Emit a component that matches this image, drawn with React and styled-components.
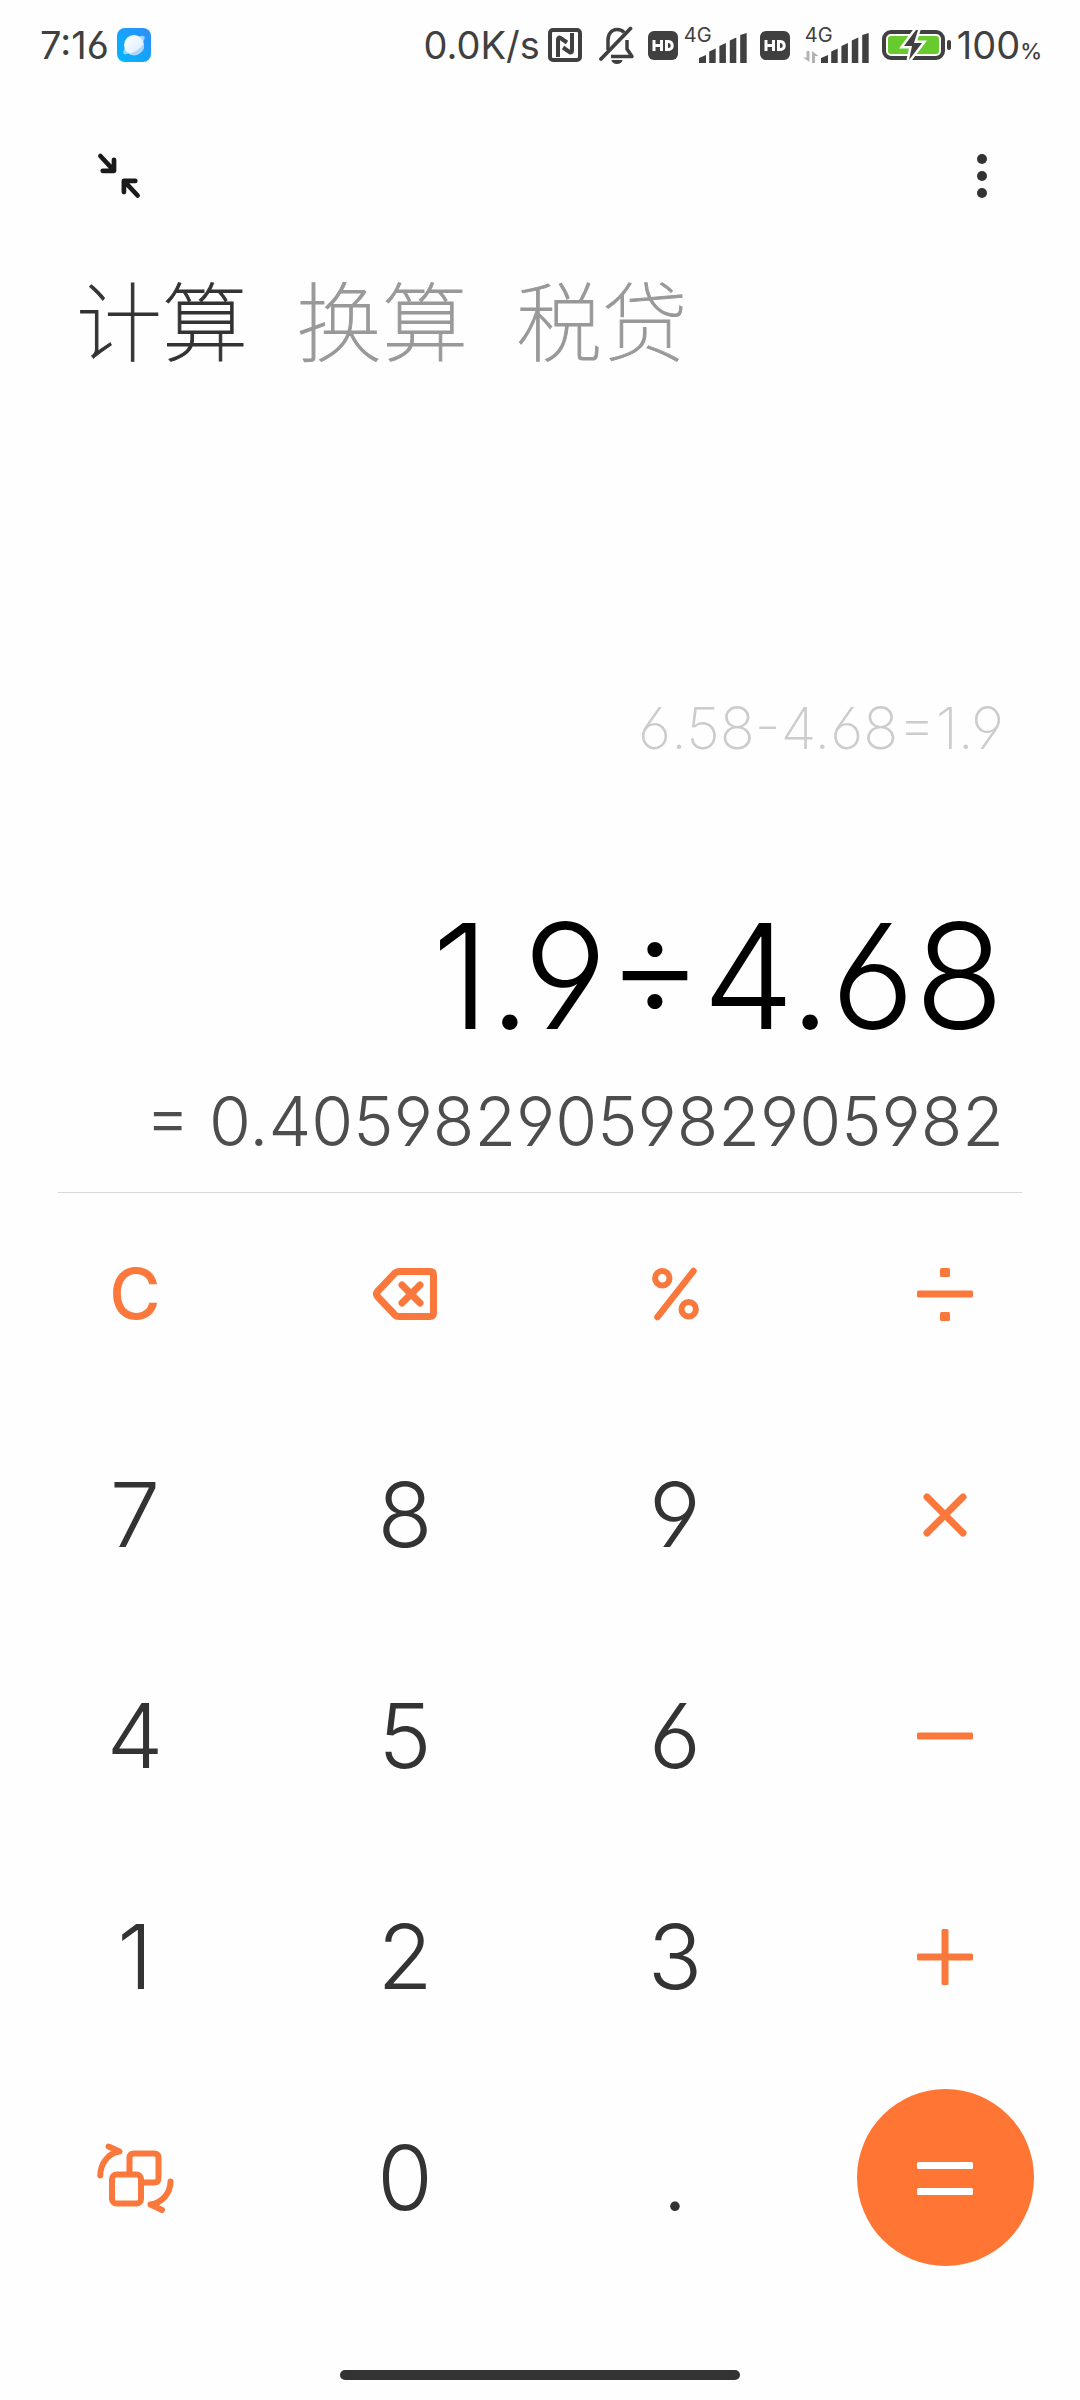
import React from 'react';
import styled, { createGlobalStyle } from 'styled-components';

const GlobalStyle = createGlobalStyle`
  * { box-sizing: border-box; }
  body {
    margin: 0;
    background: #fefefe;
    color: #333333;
    font-family: Inter, "Noto Sans CJK SC", sans-serif;
    font-feature-settings: "cv03", "cv04";
  }
  button {
    border: 0;
    padding: 0;
    background: none;
    color: inherit;
    font: inherit;
    font-feature-settings: inherit;
    cursor: pointer;
  }
  svg { display: block; }
`;

const Page = styled.div`
  display: flex;
  flex-direction: column;
  min-height: 100vh;
`;

const StatusBar = styled.header`
  display: flex;
  align-items: center;
  justify-content: space-between;
  height: 90px;
  padding: 0 38px 0 40px;
  color: #404040;
  font-size: 38px;
  line-height: 40px;
`;

const StatusGroup = styled.div`
  display: flex;
  align-items: center;
  gap: ${(p) => p.$gap}px;
`;

const Percent = styled.small`
  font-size: 22px;
  font-weight: 500;
  line-height: 1;
`;

const Signal = styled.div`
  display: grid;
  width: ${(p) => (p.$traffic ? 66 : 63)}px;
  height: 36px;

  > * { grid-area: 1 / 1; }
  > svg { justify-self: end; align-self: end; }
`;

const Network = styled.span`
  font-size: 20px;
  line-height: 16px;
  padding-left: ${(p) => (p.$traffic ? 2 : 0)}px;
`;

const Toolbar = styled.nav`
  display: flex;
  align-items: center;
  justify-content: space-between;
  height: 172px;
  padding: 0 74px;
`;

const ToolButton = styled.button`
  display: grid;
  place-items: center;
  width: 90px;
  height: 90px;
  color: #1a1a1a;

  &:last-child { width: 48px; color: #333333; }
`;

const Tabs = styled.div`
  display: flex;
  gap: 48px;
  padding: 0 76px;
`;

const Tab = styled.button`
  color: ${(p) => (p.$active ? '#333333' : '#999999')};
  font-family: "Noto Sans CJK SC", sans-serif;
  font-size: 86px;
  font-weight: 100;
  line-height: 112px;
  -webkit-text-stroke: 1px currentColor;
`;

const Display = styled.section`
  display: flex;
  flex: 1;
  flex-direction: column;
  align-items: flex-end;
  justify-content: flex-end;
  margin: 0 58px;
  padding: 0 18px 26px;
  border-bottom: 1px solid #d8d8d8;
  font-weight: 300;
`;

const History = styled.div`
  margin-bottom: 118px;
  color: #cccccc;
  font-size: 58px;
  font-weight: 200;
  line-height: 100px;
`;

const Expression = styled.div`
  margin-bottom: 20px;
  color: #000000;
  font-size: 146px;
  line-height: 160px;
`;

const Result = styled.output`
  color: #4d4d4d;
  font-size: 68px;
  line-height: 90px;
`;

const Keypad = styled.main`
  display: grid;
  grid-template-columns: repeat(4, 1fr);
  grid-auto-rows: 201px;
  gap: 20px 0;
`;

const Key = styled.button`
  display: grid;
  place-items: center;
  color: ${(p) => (p.$accent ? '#fa783c' : '#333333')};
  font-size: ${(p) => (p.$accent ? 70 : 90)}px;
  font-weight: ${(p) => (p.$accent ? 500 : 300)};
`;

const EqualsDisc = styled.span`
  display: grid;
  place-items: center;
  width: 177px;
  height: 177px;
  border-radius: 50%;
  background: #ff7533;
  color: #ffffff;
`;

const HomeArea = styled.footer`
  display: flex;
  justify-content: center;
  padding: 92px 0 20px;
`;

const HomeBar = styled.div`
  width: 400px;
  height: 10px;
  border-radius: 5px;
  background: #333333;
`;

const BrowserIcon = () => (
  <svg width="34" height="34" viewBox="0 0 34 34" aria-hidden="true">
    <defs>
      <linearGradient id="sky" x1="0" y1="1" x2="1" y2="0">
        <stop offset="0" stopColor="#00b7ff" />
        <stop offset="1" stopColor="#2f8df6" />
      </linearGradient>
      <linearGradient id="planet" x1="0" y1="0" x2="1" y2="1">
        <stop offset="0" stopColor="#ffffff" />
        <stop offset="1" stopColor="#d6ecff" />
      </linearGradient>
    </defs>
    <rect width="34" height="34" rx="8" fill="url(#sky)" />
    <ellipse cx="17" cy="17" rx="13.5" ry="4.5" transform="rotate(-40 17 17)" fill="#9bd4ff" />
    <circle cx="17" cy="17" r="10" fill="url(#planet)" />
    <path d="M26.8 15c-3 5.500-9 10-15.500 10.500a10 10 0 0 0 15.500-10.500z" fill="#a9d8fb" />
  </svg>
);

const NfcIcon = () => (
  <svg width="38" height="34" viewBox="0 0 38 34" fill="none" stroke="currentColor" aria-hidden="true">
    <rect x="2" y="2" width="30" height="30" rx="3" strokeWidth="4" />
    <path d="M10 29V11.500c0-2 1-2.500 2.500-1.500l6.500 4.500" strokeWidth="4" />
    <path d="M24 5v17.500c0 2-1 2.500-2.500 1.500L15 19.500" strokeWidth="4" />
  </svg>
);

const MutedBellIcon = () => (
  <svg width="36" height="38" viewBox="0 0 36 38" fill="none" stroke="currentColor" aria-hidden="true">
    <path d="M9 24V14c0-6 3.500-10.500 9-10.500 3 0 5.500 1 7 3" strokeWidth="3.500" />
    <path d="M28 14v9l5 7.500H12" strokeWidth="3.500" strokeLinejoin="round" />
    <path d="M2 33L31.500 2.500" strokeWidth="3.800" strokeLinecap="round" />
    <path d="M12.500 34h11a5.500 4 0 0 1-11 0z" fill="currentColor" stroke="none" />
  </svg>
);

const HdIcon = () => (
  <svg width="30" height="29" viewBox="0 0 30 29" aria-label="HD">
    <rect width="30" height="29" rx="6" fill="currentColor" />
    <path
      d="M6 9v11M13.500 9v11M6 14.500h7.500M18.500 10.500v8h2c5 0 5-8 0-8z"
      fill="none"
      stroke="#ffffff"
      strokeWidth="3"
    />
  </svg>
);

const SignalBars = () => (
  <svg width="48" height="30" viewBox="0 0 48 30" fill="currentColor" aria-hidden="true">
    <path d="M0 30v-5l7-3v8zM10.200 30V18.500l6.500-3V30zM20.400 30V13l6.500-3v20zM30.800 30V7.500l6.500-3V30zM41.200 30V2l6.500-2v30z" />
  </svg>
);

const TrafficIcon = () => (
  <svg width="66" height="12" viewBox="0 0 66 12" fill="#b3b3b3" aria-hidden="true">
    <path d="M3.500 0h3v11L0 6.500h3.500zM9 12V0l6.500 5H12v7z" />
  </svg>
);

const BatteryIcon = () => (
  <svg width="69" height="32" viewBox="0 0 69 32" aria-hidden="true">
    <rect x="2" y="3" width="59" height="26" rx="7" fill="none" stroke="currentColor" strokeWidth="4" />
    <rect x="6" y="7" width="51" height="18" rx="3" fill="#67cb2d" />
    <path
      d="M34 1L22 17h8l-3 14 13-17h-8l4-13z"
      fill="currentColor"
      stroke="#fefefe"
      strokeWidth="5"
      paintOrder="stroke"
    />
    <rect x="65" y="11" width="4" height="10" rx="2" fill="currentColor" />
  </svg>
);

const CollapseIcon = () => (
  <svg width="48" height="48" viewBox="0 0 48 48" fill="none" stroke="currentColor" strokeWidth="4.700" strokeLinecap="round" strokeLinejoin="round" aria-hidden="true">
    <path d="M5.400 4l13.600 14.600M19 7.800v11H7.700" />
    <path d="M42.600 43.500L28.900 28.900M40.300 28.900H28.900v11.200" />
  </svg>
);

const MoreIcon = () => (
  <svg width="12" height="48" viewBox="0 0 12 48" fill="currentColor" aria-hidden="true">
    <circle cx="6" cy="7" r="5" />
    <circle cx="6" cy="24" r="5" />
    <circle cx="6" cy="41" r="5" />
  </svg>
);

const operatorShapes = {
  backspace: (
    <>
      <path d="M30 13.500h31q3.500 0 3.500 3.500v38q0 3.500-3.500 3.500H30q-2.500 0-4-1.500L8.500 38.500q-2-2.500 0-5L26 15q1.500-1.500 4-1.500z" />
      <path d="M33 27l18 18M51 27L33 45" strokeLinecap="round" />
    </>
  ),
  percent: (
    <>
      <circle cx="23.300" cy="20.300" r="7.200" strokeWidth="6" />
      <circle cx="49.700" cy="51.300" r="7.200" strokeWidth="6" />
      <path d="M54.500 13L18.500 59" strokeWidth="6.500" strokeLinecap="round" />
    </>
  ),
  divide: (
    <g fill="currentColor" stroke="none">
      <rect x="8" y="32.500" width="56" height="7" rx="1.500" />
      <rect x="31" y="10" width="10" height="9" rx="1.500" />
      <rect x="31" y="54" width="10" height="9" rx="1.500" />
    </g>
  ),
  multiply: <path d="M18 18l36 36M54 18L18 54" strokeLinecap="round" strokeWidth="7" />,
  minus: <rect x="8" y="32.500" width="56" height="7" rx="1.500" fill="currentColor" stroke="none" />,
  plus: (
    <g fill="currentColor" stroke="none">
      <rect x="8" y="32.500" width="56" height="7" rx="1.500" />
      <rect x="32.500" y="8" width="7" height="56" rx="1.500" />
    </g>
  ),
  equals: (
    <g fill="currentColor" stroke="none">
      <rect x="8" y="20" width="56" height="7" rx="1.500" />
      <rect x="8" y="46" width="56" height="7" rx="1.500" />
    </g>
  ),
};

const OperatorIcon = ({ name }) => (
  <svg width="72" height="72" viewBox="0 0 72 72" fill="none" stroke="currentColor" strokeWidth="7" strokeLinejoin="round" aria-hidden="true">
    {operatorShapes[name]}
  </svg>
);

const SwitchIcon = () => (
  <svg width="90" height="90" viewBox="0 0 90 90" fill="none" stroke="currentColor" strokeWidth="6" strokeLinecap="round" strokeLinejoin="round" aria-hidden="true">
    <rect x="22" y="41.500" width="29" height="29" rx="4.500" />
    <path d="M39.500 41V25q0-4.500 4.500-4.500h20q4.500 0 4.500 4.500v20q0 4.500-4.500 4.500H52" />
    <path d="M10.300 42.500C10.300 31 18 20 29.500 18.500L18.500 13.500" />
    <path d="M80.500 48.500C80.500 60 72 70 60.500 71.500l11.500 5.500" />
  </svg>
);

const keys = [
  { label: '清除', text: 'C', accent: true },
  { label: '退格', icon: 'backspace' },
  { label: '百分号', icon: 'percent' },
  { label: '除', icon: 'divide' },
  { text: '7' }, { text: '8' }, { text: '9' },
  { label: '乘', icon: 'multiply' },
  { text: '4' }, { text: '5' }, { text: '6' },
  { label: '减', icon: 'minus' },
  { text: '1' }, { text: '2' }, { text: '3' },
  { label: '加', icon: 'plus' },
  { label: '切换', icon: 'switch' },
  { text: '0' }, { text: '.' },
  { label: '等于', icon: 'equals' },
];

const KeyFace = ({ text, icon }) => {
  if (text) return text;
  if (icon === 'switch') return <SwitchIcon />;
  if (icon === 'equals') return <EqualsDisc><OperatorIcon name="equals" /></EqualsDisc>;
  return <OperatorIcon name={icon} />;
};

export default function App() {
  return (
    <>
      <GlobalStyle />
      <Page>
        <StatusBar>
          <StatusGroup $gap={8}>
            <span>7:16</span>
            <BrowserIcon />
          </StatusGroup>
          <StatusGroup $gap={13}>
            <StatusGroup $gap={8}>
              <span>0.0K/s</span>
              <NfcIcon />
            </StatusGroup>
            <MutedBellIcon />
            <StatusGroup $gap={6}>
              <HdIcon />
              <Signal>
                <Network>4G</Network>
                <SignalBars />
              </Signal>
            </StatusGroup>
            <HdIcon />
            <Signal $traffic>
              <Network $traffic>4G</Network>
              <TrafficIcon />
              <SignalBars />
            </Signal>
            <StatusGroup $gap={6}>
              <BatteryIcon />
              <span>100<Percent>%</Percent></span>
            </StatusGroup>
          </StatusGroup>
        </StatusBar>

        <Toolbar>
          <ToolButton aria-label="小窗"><CollapseIcon /></ToolButton>
          <ToolButton aria-label="更多"><MoreIcon /></ToolButton>
        </Toolbar>

        <Tabs>
          <Tab $active>计算</Tab>
          <Tab>换算</Tab>
          <Tab>税贷</Tab>
        </Tabs>

        <Display>
          <History>6.58-4.68=1.9</History>
          <Expression>1.9÷4.68</Expression>
          <Result>= 0.405982905982905982</Result>
        </Display>

        <Keypad>
          {keys.map((key) => (
            <Key key={key.label || key.text} aria-label={key.label} $accent={key.accent || Boolean(key.icon)}>
              <KeyFace text={key.text} icon={key.icon} />
            </Key>
          ))}
        </Keypad>

        <HomeArea>
          <HomeBar />
        </HomeArea>
      </Page>
    </>
  );
}
